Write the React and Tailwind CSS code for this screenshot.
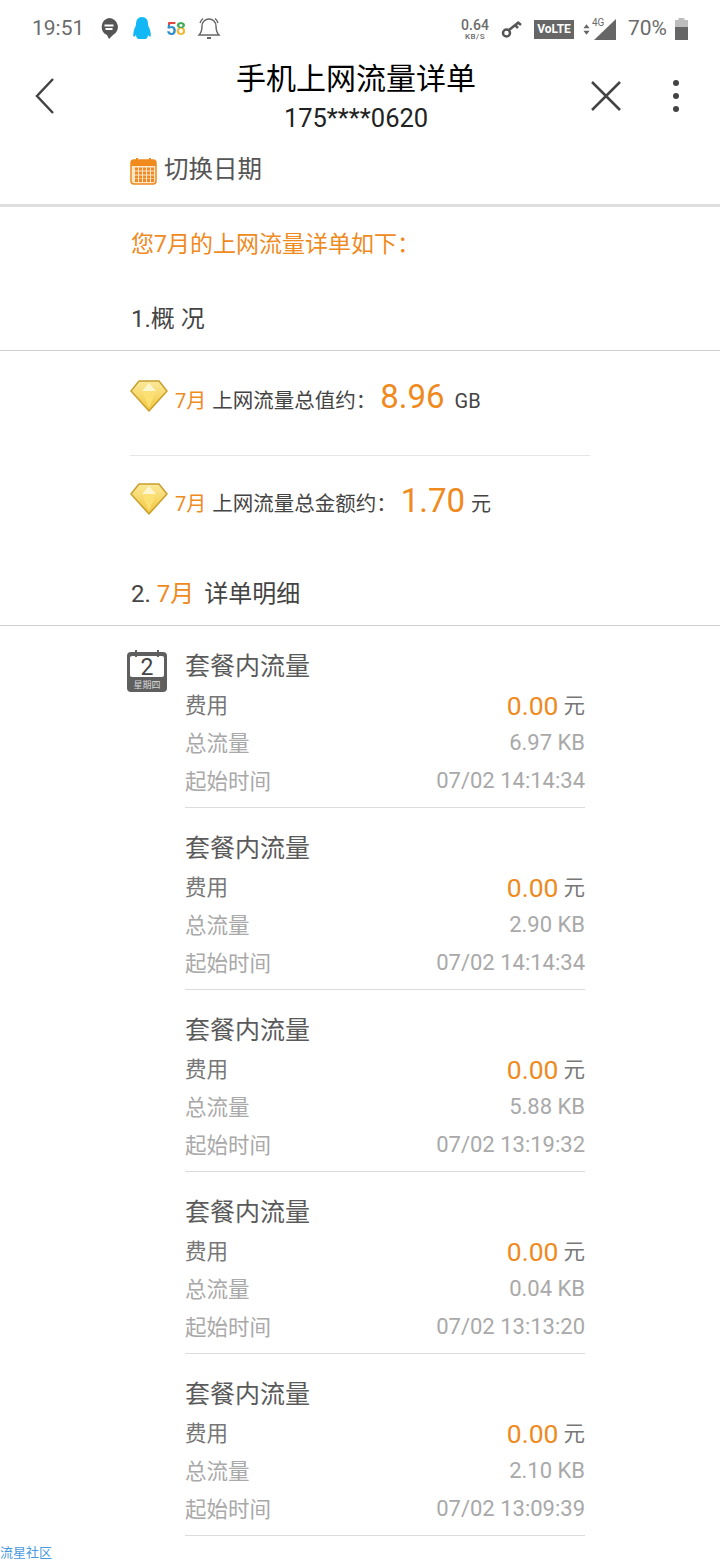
import React from "react";

const font = "font-['Roboto','Noto_Sans_CJK_SC',sans-serif]";

const records = [
  { total: "6.97 KB", time: "07/02 14:14:34" },
  { total: "2.90 KB", time: "07/02 14:14:34" },
  { total: "5.88 KB", time: "07/02 13:19:32" },
  { total: "0.04 KB", time: "07/02 13:13:20" },
  { total: "2.10 KB", time: "07/02 13:09:39" },
];

const Diamond = () => (
  <svg width="38" height="32" viewBox="0 0 38 32" className="shrink-0">
    <defs>
      <linearGradient id="gem" x1="0" y1="0" x2="0" y2="1">
        <stop offset="0" stopColor="#fbe99a" />
        <stop offset="1" stopColor="#f3c63a" />
      </linearGradient>
    </defs>
    <path d="M9 1h20l8 10-18 20L1 11z" fill="url(#gem)" stroke="#c9a02e" strokeWidth="1.5" strokeLinejoin="round" />
    <path d="M12 11l7-8 7 8-7 3z" fill="#fdf6cf" />
    <path d="M12 11h14l-7 17z" fill="#fbe074" />
  </svg>
);

const CalendarIcon = () => (
  <svg width="27" height="28" viewBox="0 0 27 28" className="mt-[2px] shrink-0">
    <rect x="1" y="3" width="25" height="24" rx="3" fill="#fde6c8" stroke="#f08a1d" strokeWidth="1.5" />
    <path d="M1 9V5a2 2 0 0 1 2-2h21a2 2 0 0 1 2 2v4z" fill="#f08a1d" />
    <rect x="6" y="1" width="2" height="4" fill="#f08a1d" />
    <rect x="19" y="1" width="2" height="4" fill="#f08a1d" />
    {[11, 15, 19, 22.5].map((y) =>
      [5, 9, 13, 17, 21].map((x) => (
        <rect key={`${x}-${y}`} x={x} y={y - 0.5} width="3" height="3" fill="#ee8a24" />
      ))
    )}
  </svg>
);

const DayIcon = () => (
  <svg width="40" height="42" viewBox="0 0 40 42" className="shrink-0">
    <rect x="0" y="2" width="40" height="40" rx="4" fill="#5f5f5f" />
    <rect x="3" y="6" width="34" height="21" rx="2" fill="#fff" />
    <rect x="8" y="0" width="2" height="7" fill="#5f5f5f" />
    <rect x="30" y="0" width="2" height="7" fill="#5f5f5f" />
    <text x="20" y="25" textAnchor="middle" fontSize="23" fill="#444" fontFamily="Roboto">2</text>
    <text x="20" y="38" textAnchor="middle" fontSize="9" fill="#d9d9d9" fontFamily="'Noto Sans CJK SC'">星期四</text>
  </svg>
);

const StatusLeft = () => (
  <div className="flex items-center">
    <span className="ml-[32px] text-[21px] text-[#6b6b6b]">19:51</span>
    <svg width="20" height="24" viewBox="0 0 20 24" className="ml-[15px]">
      <path d="M10 1a9 9 0 0 1 4 17l-4 4-2-4A9 9 0 0 1 10 1z" fill="#555" />
      <rect x="5.500" y="7.500" width="9" height="2" fill="#fff" />
      <rect x="6.500" y="11" width="7" height="2" fill="#fff" />
    </svg>
    <svg width="20" height="24" viewBox="0 0 20 24" className="ml-[13px]">
      <path d="M10 0c4 0 6 3 6 7 0 2 1 3 2 6 1 4 1 7 0 7l-2-2c0 2-1 3-2 4H6c-1-1-2-2-2-4l-2 2c-1 0-1-3 0-7 1-3 2-4 2-6 0-4 2-7 6-7z" fill="#12b7f5" />
    </svg>
    <span className="ml-[14px] w-[20px] text-[18px] font-bold leading-none tracking-[-1px]">
      <span className="bg-[linear-gradient(180deg,#e0483f_0%,#e0483f_30%,#2f8fc9_35%,#2f8fc9_100%)] bg-clip-text text-transparent">5</span>
      <span className="bg-[linear-gradient(180deg,#43ad5b_0%,#43ad5b_45%,#f0b93c_50%,#f0b93c_100%)] bg-clip-text text-transparent">8</span>
    </span>
    <svg width="24" height="26" viewBox="0 0 24 26" className="ml-[11px]" fill="none" stroke="#666" strokeWidth="1.4">
      <path d="M12 3a7 7 0 0 0-7 7c0 5-1 7-3 9h20c-2-2-3-4-3-9a7 7 0 0 0-7-7z" />
      <path d="M10 22h4" strokeWidth="2" />
      <path d="M3 7c.6-2 1.6-3.400 3-4.500M21 7c-.6-2-1.600-3.400-3-4.500" />
    </svg>
  </div>
);

const StatusRight = () => (
  <div className="flex items-center text-[#6b6b6b]">
    <div className="flex w-[28px] flex-col items-center font-medium leading-none">
      <span className="text-[14px]">0.64</span>
      <span className="mt-[1px] text-[8px] tracking-[0.5px]">KB/S</span>
    </div>
    <svg width="22" height="20" viewBox="0 0 22 20" className="ml-[12px]" fill="none" stroke="#555">
      <circle cx="5.500" cy="14" r="3.500" strokeWidth="2.500" />
      <path d="M8 11l10-8M14 6l3 3M17 3.500l3 2.500" strokeWidth="2.500" />
    </svg>
    <span className="ml-[11px] flex h-[19px] w-[40px] items-center justify-center bg-[#666] text-[12px] font-bold text-white">VoLTE</span>
    <svg width="7" height="11" viewBox="0 0 8 12" className="ml-[9px] mt-[1px]" fill="#666">
      <path d="M4 0l3.500 4.500h-7zM4 12L.5 7.500h7z" />
    </svg>
    <div className="relative ml-[4px] h-[22px] w-[22px]">
      <svg width="22" height="21" viewBox="0 0 22 21" className="absolute left-0 top-[1px]">
        <path d="M22 0v21H0z" fill="#666" />
      </svg>
      <span className="absolute left-[-2px] top-[-1px] text-[10px] leading-[11px]">4G</span>
    </div>
    <span className="ml-[12px] text-[21px]">70%</span>
    <svg width="13" height="22" viewBox="0 0 13 22" className="ml-[8px]">
      <rect x="3.500" y="0" width="6" height="3" fill="#bdbdbd" />
      <rect x="0" y="2" width="13" height="7" fill="#bdbdbd" />
      <rect x="0" y="9" width="13" height="13" fill="#666" />
    </svg>
  </div>
);

const Record = ({ total, time }) => (
  <div className="h-[182px] border-b border-[#dcdcdc] pt-[22px]">
    <div className="text-[25px] leading-[38px] text-[#5a5a5a]">套餐内流量</div>
    <div className="mt-[1px] flex h-[38px] items-center justify-between text-[21.500px] text-[#777]">
      <span>费用</span>
      <span className="flex items-center">
        <span className="text-[26.500px] text-[#ef8a1e]">0.00</span>
        <span className="ml-[5px]">元</span>
      </span>
    </div>
    <div className="flex h-[38px] items-center justify-between text-[21.500px] text-[#a9a9a9]">
      <span>总流量</span>
      <span className="relative top-[-2px] text-[22px]">{total}</span>
    </div>
    <div className="flex h-[38px] items-center justify-between text-[21.500px] text-[#a9a9a9]">
      <span>起始时间</span>
      <span className="relative top-[-2px] text-[22px]">{time}</span>
    </div>
  </div>
);

export default function App() {
  return (
    <div className={`${font} h-[1560px] w-[720px] overflow-hidden bg-white`}>
      {/* Status bar */}
      <div className="flex h-[56px] items-center justify-between pr-[32px] pt-[2px]">
        <StatusLeft />
        <StatusRight />
      </div>

      {/* Nav */}
      <div className="flex h-[80px] items-center">
        <svg width="20" height="36" viewBox="0 0 20 36" className="ml-[35px] shrink-0" fill="none" stroke="#444" strokeWidth="2.500">
          <path d="M18 1L2 18l16 17" />
        </svg>
        <div className="ml-[-59px] flex w-[720px] shrink-0 flex-col items-center text-black">
          <span className="relative top-[-1px] text-[30px] leading-[44px]">手机上网流量详单</span>
          <span className="text-[25.500px] leading-[32px] text-[#222]">175****0620</span>
        </div>
        <svg width="32" height="32" viewBox="0 0 32 32" className="ml-[-126px] shrink-0" fill="none" stroke="#444" strokeWidth="2.500">
          <path d="M2 2l28 28M30 2L2 30" />
        </svg>
        <div className="ml-[51px] flex shrink-0 flex-col gap-[7px]">
          <span className="h-[6px] w-[6px] rounded-full bg-[#444]" />
          <span className="h-[6px] w-[6px] rounded-full bg-[#444]" />
          <span className="h-[6px] w-[6px] rounded-full bg-[#444]" />
        </div>
      </div>

      {/* Date switch */}
      <div className="flex h-[71px] items-center border-b-[3px] border-[#dedede] pl-[130px]">
        <CalendarIcon />
        <span className="ml-[7px] text-[24.500px] text-[#555]">切换日期</span>
      </div>

      <div className="pl-[131px] pt-[18px] text-[23px] leading-[40px] text-[#ef8a1e]">您7月的上网流量详单如下：</div>

      <div className="mt-[36px] flex h-[50px] items-start border-b border-[#cfcfcf] pl-[131px] text-[24px] leading-[36px] text-[#444]">
        1.概 况
      </div>

      {/* Summary */}
      <div className="mx-[130px] w-[460px]">
        <div className="flex h-[105px] items-start border-b border-[#e6e6e6] pt-[29px] text-[#444]">
          <Diamond />
          <span className="ml-[7px] mt-[6px] text-[20px] text-[#ef8a1e]">7月</span>
          <span className="ml-[6px] mt-[6px] text-[20.500px]">上网流量总值约：</span>
          <span className="ml-[4px] mt-[-5px] text-[33px] leading-[44px] text-[#ef8a1e]">8.96</span>
          <span className="ml-[10px] mt-[6px] text-[20px]">GB</span>
        </div>
        <div className="flex h-[104px] items-start pt-[27px] text-[#444]">
          <Diamond />
          <span className="ml-[7px] mt-[6px] text-[20px] text-[#ef8a1e]">7月</span>
          <span className="ml-[6px] mt-[6px] text-[20.500px]">上网流量总金额约：</span>
          <span className="ml-[4px] mt-[-4px] text-[33px] leading-[44px] text-[#ef8a1e]">1.70</span>
          <span className="ml-[6px] mt-[6px] text-[20px]">元</span>
        </div>
      </div>

      <div className="mt-[16px] flex h-[50px] items-start border-b border-[#cfcfcf] pl-[131px] text-[24px] leading-[36px] text-[#444]">
        <span>2.</span>
        <span className="ml-[6px] text-[#ef8a1e]">7月</span>
        <span className="ml-[10px]">详单明细</span>
      </div>

      {/* Records */}
      <div className="flex items-start pl-[127px]">
        <div className="mt-[24px]">
          <DayIcon />
        </div>
        <div className="ml-[18px] w-[400px]">
          {records.map((r, i) => (
            <Record key={i} total={r.total} time={r.time} />
          ))}
        </div>
      </div>

      <div className="mt-[10px] text-[13px] leading-[14px] text-[#4a9ae0]">流星社区</div>
    </div>
  );
}
